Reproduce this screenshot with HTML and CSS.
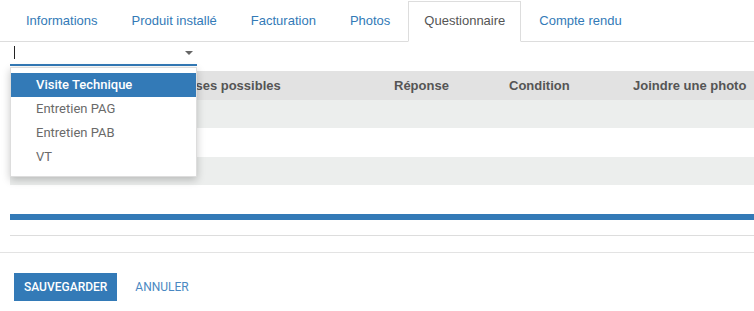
FILE: index.html
```html
<!DOCTYPE html>
<html lang="fr">
<head>
<meta charset="utf-8">
<link rel="stylesheet" href="styles.css">
</head>
<body>
<nav class="tabs">
  <a class="tab">Informations</a>
  <a class="tab">Produit installé</a>
  <a class="tab">Facturation</a>
  <a class="tab">Photos</a>
  <a class="tab active">Questionnaire</a>
  <a class="tab">Compte rendu</a>
</nav>
<main class="content">
  <div class="select">
    <span class="cursor"></span>
    <span class="arrow"></span>
  </div>
  <div class="table">
    <div class="row head">
      <div class="cell"></div>
      <div class="cell">Réponses possibles</div>
      <div class="cell">Réponse</div>
      <div class="cell">Condition</div>
      <div class="cell">Joindre une photo</div>
    </div>
    <div class="row odd r1"></div>
    <div class="row r2"></div>
    <div class="row odd r3"></div>
  </div>
  <div class="bar"></div>
  <div class="thin"></div>
  <ul class="menu">
    <li class="item selected">Visite Technique</li>
    <li class="item">Entretien PAG</li>
    <li class="item">Entretien PAB</li>
    <li class="item">VT</li>
  </ul>
</main>
<footer class="footer">
  <button class="btn primary">Sauvegarder</button>
  <button class="btn link">Annuler</button>
</footer>
</body>
</html>
```
FILE: styles.css
```css
* { box-sizing: border-box; }
html, body { margin: 0; padding: 0; background: #fff; }
body { font-family: "Liberation Sans", Arial, sans-serif; font-size: 13px; color: #555; width: 754px; height: 311px; overflow: hidden; }

.tabs { display: flex; padding: 1px 0 0 10px; border-bottom: 1px solid #ddd; height: 42px; }
.tab { display: block; height: 41px; margin-bottom: -1px; padding: 0 15px; margin-right: 2px; border: 1px solid transparent; line-height: 37px; color: #337ab7; white-space: nowrap; }
.tab.active { color: #555; border-color: #ddd; border-bottom-color: #fff; background: #fff; }

.content { position: relative; padding-left: 10px; }
.select { position: relative; width: 187px; height: 24px; border-bottom: 2px solid #337ab7; }
.cursor { position: absolute; left: 4px; top: 4px; width: 1px; height: 13px; background: #222; }
.arrow { position: absolute; left: 175px; top: 9px; width: 0; height: 0; border-left: 4px solid transparent; border-right: 4px solid transparent; border-top: 4px solid #666; }

.table { margin-top: 5px; }
.row { display: grid; grid-template-columns: 135px 239px 115px 124px 1fr; height: 28px; }
.row.head { height: 29px; background: #e2e2e2; font-weight: bold; align-items: center; }
.row.odd { background: #eceeed; }
.row.r2 { height: 29px; }
.cell { padding: 0 10px; white-space: nowrap; }

.bar { margin-top: 29px; height: 6px; background: #337ab7; }
.thin { margin-top: 15px; height: 1px; background: #ddd; }

.menu { position: absolute; left: 10px; top: 25px; width: 187px; margin: 0; padding: 5px 0 7px; list-style: none; background: #fff; border: 1px solid #ddd; box-shadow: 0 3px 8px rgba(0,0,0,0.22); font-family: Roboto, "Liberation Sans", sans-serif; font-size: 13px; }
.item { height: 24px; line-height: 24px; padding-left: 25px; color: #6a6a6a; }
.item.selected { background: #337ab7; color: #fff; font-weight: 500; }

.footer { margin-top: 16px; border-top: 1px solid #e3e3e3; padding: 20px 0 0 14px; display: flex; gap: 8px; }
.btn { font-family: Roboto, "Liberation Sans", sans-serif; font-weight: 500; font-size: 12px; text-transform: uppercase; height: 28px; padding: 0 10px; border: 0; border-radius: 0; cursor: pointer; }
.btn.primary { background: #337ab7; color: #fff; }
.btn.link { background: transparent; color: #4a88c2; font-weight: 400; }
```
